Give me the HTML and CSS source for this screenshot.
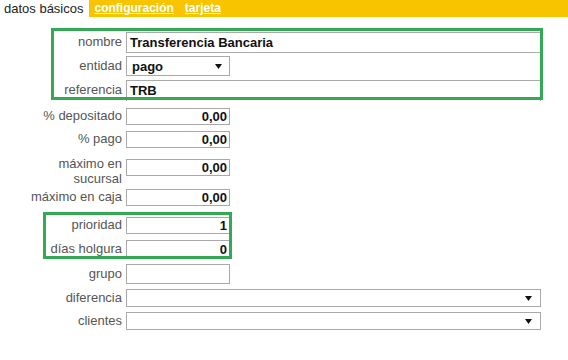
FILE: index.html
```html
<!DOCTYPE html>
<html lang="es">
<head>
<meta charset="utf-8">
<title>datos básicos</title>
<link rel="stylesheet" href="styles.css">
</head>
<body>
<div class="page">
  <nav class="tabs">
    <span class="tab-active">datos básicos</span>
    <div class="tab-bar">
      <a class="tab-link" href="#">configuración</a>
      <a class="tab-link" href="#">tarjeta</a>
    </div>
  </nav>
  <div class="form">
    <div class="row r1"><label class="lbl">nombre</label><div class="field wide txt">Transferencia Bancaria</div></div>
    <div class="row r2"><label class="lbl">entidad</label><div class="field sel short txt">pago<svg class="arrow" width="7" height="5" viewBox="0 0 7 5"><polygon points="0,0 7,0 3.5,5" fill="#111"/></svg></div></div>
    <div class="row r3"><label class="lbl">referencia</label><div class="field wide txt ref">TRB</div></div>
    <div class="row r4"><label class="lbl">% depositado</label><div class="field short num">0,00</div></div>
    <div class="row r5"><label class="lbl">% pago</label><div class="field short num">0,00</div></div>
    <div class="row r6"><label class="lbl">máximo en sucursal</label><div class="field short num">0,00</div></div>
    <div class="row r7"><label class="lbl">máximo en caja</label><div class="field short num">0,00</div></div>
    <div class="row r8"><label class="lbl">prioridad</label><div class="field short num">1</div></div>
    <div class="row r9"><label class="lbl">días holgura</label><div class="field short num tallf">0</div></div>
    <div class="row r10"><label class="lbl">grupo</label><div class="field short num grp"></div></div>
    <div class="row r11"><label class="lbl">diferencia</label><div class="field wide sel"><svg class="arrow" width="7" height="5" viewBox="0 0 7 5"><polygon points="0,0 7,0 3.5,5" fill="#111"/></svg></div></div>
    <div class="row r12"><label class="lbl">clientes</label><div class="field wide sel"><svg class="arrow" width="7" height="5" viewBox="0 0 7 5"><polygon points="0,0 7,0 3.5,5" fill="#111"/></svg></div></div>
  </div>
  <div class="hl hl-1"></div>
  <div class="hl hl-2"></div>
</div>
</body>
</html>
```
FILE: styles.css
```css
html, body {
  margin: 0;
  padding: 0;
  background: #fff;
}
body {
  font-family: "Liberation Sans", Arial, sans-serif;
  font-size: 13px;
  color: #222;
}
.page {
  position: relative;
  width: 568px;
  height: 360px;
  overflow: hidden;
}
.tabs {
  display: flex;
  height: 17px;
  line-height: 17px;
}
.tab-active {
  padding: 0 5px 0 4px;
  color: #222;
}
.tab-bar {
  flex: 1;
  background: #f8c400;
  display: flex;
  gap: 11px;
  padding-left: 6px;
}
.tab-link {
  color: #fff;
  font-weight: bold;
  font-size: 12px;
  text-decoration: underline;
}
.form {
  display: flex;
  flex-direction: column;
  padding-top: 14px;
}
.row {
  display: flex;
  align-items: center;
  height: 22px;
}
.lbl {
  box-sizing: border-box;
  width: 126px;
  padding: 0 4px 0 30px;
  text-align: right;
  color: #555;
  line-height: 24px;
}
.field {
  box-sizing: border-box;
  border: 1px solid #a9a9a9;
  height: 17px;
  background: #fff;
  font-weight: bold;
  color: #111;
  display: flex;
  align-items: center;
}
.short { width: 104px; }
.wide { width: 415px; }
.txt { padding-left: 3px; }
.num { justify-content: flex-end; padding-right: 2px; }
.r1 .field { height: 21px; }
.r3 .field { height: 21px; border-bottom: none; }
.sel { justify-content: space-between; padding-right: 7px; height: 20px; }
.r2 .sel { padding-left: 5px; }
.r11 .sel, .r12 .sel { justify-content: flex-end; height: 18px; padding-right: 8px; }
.tallf { height: 19px; }
.grp { height: 20px; }
.r1 { margin-top: 0; }
.r2 { margin-top: 2px; }
.r3 { margin-top: 2px; }
.r4 { margin-top: 4px; }
.r5 { margin-top: 1px; }
.r6 { height: 30px; margin-top: 6px; align-items: flex-start; }
.r6 .lbl { line-height: 15px; }
.r6 .field { margin-top: 3px; }
.r7 { margin-top: 0; }
.r8 { margin-top: 6px; }
.r9 { margin-top: 2px; }
.r10 { margin-top: 3px; }
.r11 { margin-top: 2px; }
.r12 { margin-top: 1px; }
.hl {
  position: absolute;
  box-sizing: border-box;
  border: 3px solid #34a853;
  pointer-events: none;
}
.hl-1 { left: 51px; top: 28px; width: 492px; height: 72px; }
.hl-2 { left: 43px; top: 212px; width: 189px; height: 47px; }
```
